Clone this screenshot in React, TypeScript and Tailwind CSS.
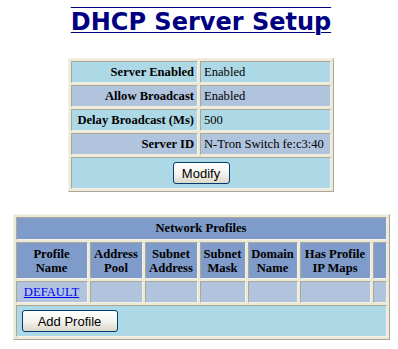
import React from "react";

const serif = { fontFamily: '"Liberation Serif", "Times New Roman", serif' };
const sans = { fontFamily: '"Liberation Sans", Arial, sans-serif' };

const tableCls =
  "border-separate border-spacing-[2px] table-fixed bg-[#ece9d8] border border-t-[#f4f2e8] border-l-[#f4f2e8] border-r-[#aca899] border-b-[#aca899]";
const cellBorder =
  "border border-t-[#aca899] border-l-[#aca899] border-r-[#f4f2e8] border-b-[#f4f2e8]";

function XpButton({ label, w }: { label: string; w: string }) {
  return (
    <button
      className={`${w} h-[22px] rounded-[3px] border border-[#003c74] bg-gradient-to-b from-[#ffffff] via-[#f5f4ef] to-[#dcd8c8] text-[13px] leading-none text-black`}
      style={sans}
    >
      {label}
    </button>
  );
}

export default function App() {
  const rows: [string, string, string][] = [
    ["Server Enabled", "Enabled", "bg-[#add8e6]"],
    ["Allow Broadcast", "Enabled", "bg-[#b0c4de]"],
    ["Delay Broadcast (Ms)", "500", "bg-[#add8e6]"],
    ["Server ID", "N-Tron Switch fe:c3:40", "bg-[#b0c4de]"],
  ];
  const heads: [string, string][] = [
    ["Profile", "Name"],
    ["Address", "Pool"],
    ["Subnet", "Address"],
    ["Subnet", "Mask"],
    ["Domain", "Name"],
    ["Has Profile", "IP Maps"],
  ];
  return (
    <div className="w-[398px] h-[349px] bg-white flex flex-col items-center pl-[4px] pt-[8px]">
      <h1
        className="text-[24px] leading-[28px] font-bold text-[#000080] underline decoration-1 underline-offset-[2px]"
        style={{
          fontFamily: '"DejaVu Sans", Verdana, sans-serif',
          textDecorationLine: "underline overline",
        }}
      >
        DHCP Server Setup
      </h1>

      <table className={`${tableCls} w-[266px] mt-[22px] text-[12.6px] text-black`} style={serif}>
        <colgroup>
          <col className="w-[127px]" />
          <col />
        </colgroup>
        <tbody>
          {rows.map(([k, v, bg]) => (
            <tr key={k}>
              <td className={`${cellBorder} ${bg} h-[22px] px-[3px] text-right font-bold whitespace-nowrap`}>
                {k}
              </td>
              <td className={`${cellBorder} ${bg} h-[22px] px-[3px] text-left whitespace-nowrap`}>{v}</td>
            </tr>
          ))}
          <tr>
            <td colSpan={2} className={`${cellBorder} bg-[#add8e6] h-[32px] text-center align-middle`}>
              <XpButton label="Modify" w="w-[57px]" />
            </td>
          </tr>
        </tbody>
      </table>

      <table className={`${tableCls} w-[377px] mt-[22px] text-[12.6px] text-black`} style={serif}>
        <colgroup>
          <col className="w-[72px]" />
          <col className="w-[53px]" />
          <col className="w-[53px]" />
          <col className="w-[46px]" />
          <col className="w-[50px]" />
          <col className="w-[71px]" />
          <col />
        </colgroup>
        <tbody>
          <tr>
            <td colSpan={7} className={`${cellBorder} bg-[#7f9bc9] h-[23px] text-center font-bold`}>
              Network Profiles
            </td>
          </tr>
          <tr>
            {heads.map(([a, b]) => (
              <td
                key={a + b}
                className={`${cellBorder} bg-[#7f9bc9] h-[37px] text-center font-bold leading-[14px] whitespace-nowrap`}
              >
                {a}
                <br />
                {b}
              </td>
            ))}
            <td className={`${cellBorder} bg-[#7f9bc9] h-[37px]`}></td>
          </tr>
          <tr>
            <td className={`${cellBorder} bg-[#b0c4de] h-[22px] text-center`}>
              <a href="#" className="text-[#0000ff] underline">
                DEFAULT
              </a>
            </td>
            {[0, 1, 2, 3, 4, 5].map((i) => (
              <td key={i} className={`${cellBorder} bg-[#b0c4de] h-[22px]`}></td>
            ))}
          </tr>
          <tr>
            <td colSpan={7} className={`${cellBorder} bg-[#add8e6] h-[32px] pl-[5px] text-left align-middle`}>
              <XpButton label="Add Profile" w="w-[96px]" />
            </td>
          </tr>
        </tbody>
      </table>
    </div>
  );
}
